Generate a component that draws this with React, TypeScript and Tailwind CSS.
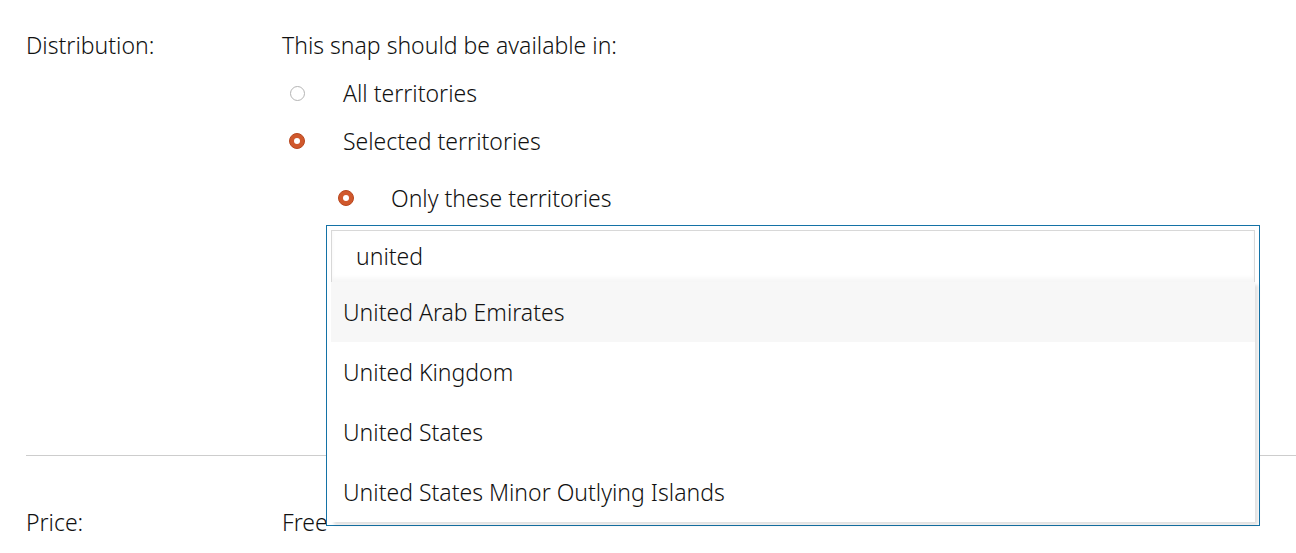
import { useState } from 'react'

const territories = [
  'United Arab Emirates',
  'United Kingdom',
  'United States',
  'United States Minor Outlying Islands',
]

function Radio({ checked }: { checked: boolean }) {
  if (checked) {
    return (
      <span className="w-[16px] h-[16px] rounded-full bg-[#d0582c] border border-[#b8471f] flex items-center justify-center shrink-0">
        <span className="w-[6px] h-[6px] rounded-full bg-white" />
      </span>
    )
  }
  return <span className="w-[15px] h-[15px] rounded-full border border-[#b4b4b4] bg-white shrink-0" />
}

export default function App() {
  const [query] = useState('united')

  return (
    <div className="min-h-[553px] bg-white text-[#111] text-[23px] font-light pl-[26px] font-['Noto_Sans',sans-serif] overflow-hidden">
      {/* Distribution */}
      <div className="flex pt-[21px]">
        <div className="w-[256px] h-[48px] flex items-center">Distribution:</div>
        <div className="flex-1 relative">
          <div className="h-[48px] flex items-center">This snap should be available in:</div>
          <div className="h-[48px] flex items-center">
            <span className="w-[30px] flex justify-center">
              <Radio checked={false} />
            </span>
            <span className="ml-[31px]">All territories</span>
          </div>
          <div className="h-[48px] flex items-center">
            <span className="w-[30px] flex justify-center">
              <Radio checked />
            </span>
            <span className="ml-[31px]">Selected territories</span>
          </div>
          <div className="h-[66px] flex items-center pl-[49px]">
            <span className="w-[30px] flex justify-center">
              <Radio checked />
            </span>
            <span className="ml-[30px]">Only these territories</span>
          </div>

          {/* Autocomplete dropdown */}
          <div className="absolute left-[44px] top-[204px] w-[934px] h-[301px] border border-[#1472a6] bg-white p-[4px] z-10 flex flex-col">
            <div className="h-[52px] shrink-0 border border-[#d8d8d8] border-b-0 shadow-[inset_0_-4px_4px_rgba(0,0,0,0.04)] flex items-center pl-[24px]">
              {query}
            </div>
            <div className="shadow-[3px_3px_3px_rgba(0,0,0,0.12)]">
              {territories.map((t, i) => (
                <div
                  key={t}
                  className={
                    'h-[60px] flex items-center pl-[12px] ' + (i === 0 ? 'bg-[#f7f7f7]' : 'bg-white')
                  }
                >
                  {t}
                </div>
              ))}
            </div>
          </div>
        </div>
      </div>

      <div className="h-[224px]" />
      <div className="border-t border-[#cdcdcd]" />

      {/* Price */}
      <div className="flex mt-[42px]">
        <div className="w-[256px] h-[48px] flex items-center">Price:</div>
        <div className="h-[48px] flex items-center">Free</div>
      </div>
    </div>
  )
}
